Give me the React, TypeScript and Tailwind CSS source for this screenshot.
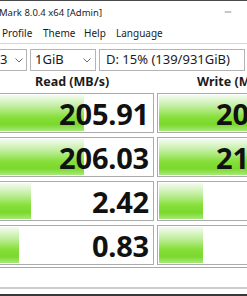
import { Minus } from "lucide-react"

/* results: bar widths are pixels inside each box */
const rows = [
  { read: "205.91", readBar: 84, write: "205.47", writeBar: 150 },
  { read: "206.03", readBar: 84, write: "211.52", writeBar: 150 },
  { read: "2.42", readBar: 31, write: "1.96", writeBar: 44 },
  { read: "0.83", readBar: 19, write: "1.88", writeBar: 44 },
]

function Chevron() {
  return (
    <svg width="8" height="5" viewBox="0 0 8 5" className="shrink-0">
      <polyline points="0.5,0.5 4,4 7.5,0.5" fill="none" stroke="#6b6b6b" strokeWidth="1" />
    </svg>
  )
}

function ResultBox({ value, bar, className }: { value: string; bar: number; className: string }) {
  return (
    <div className={`relative h-[40px] border border-[#ababab] bg-white p-px ${className}`}>
      <div
        className="h-full bg-[linear-gradient(to_bottom,#f4fbef_0%,#c4efa4_30%,#86df3a_62%,#7ad92c_82%,#a6e87a_100%)]"
        style={{ width: bar }}
      />
      <span className="absolute right-[4px] top-0 bottom-0 flex items-center text-[29px] font-bold leading-none text-[#111] tracking-[-0.2px]">
        {value}
      </span>
    </div>
  )
}

export default function App() {
  return (
    <div className="w-[247px] h-[296px] overflow-hidden bg-white font-['Noto_Sans',sans-serif] text-[#1b1b1b]">
      {/* title bar */}
      <div className="h-[25px] border-t border-[#4a4a4a] flex items-center justify-between">
        <span className="-ml-[1px] text-[9.5px]">Mark 8.0.4 x64 [Admin]</span>
        <Minus className="w-[10px] h-[10px] mr-[14px] mb-[3px] text-[#333]" strokeWidth={1.3} />
      </div>

      {/* menu */}
      <div className="h-[19px] border-b border-[#d6d6d6] flex items-center text-[10px] pb-[1px] whitespace-nowrap">
        <span className="ml-[2px] w-[41px] shrink-0">Profile</span>
        <span className="w-[41px] shrink-0">Theme</span>
        <span className="w-[32px] shrink-0">Help</span>
        <span>Language</span>
      </div>

      {/* combos */}
      <div className="mt-[5px] h-[22px] flex gap-[3px] text-[13px]">
        <div className="-ml-[12px] w-[39px] shrink-0 border border-[#b4b4b4] flex items-center justify-between pl-[11px] pr-[3px]">
          <span>3</span>
          <Chevron />
        </div>
        <div className="w-[66px] shrink-0 border border-[#b4b4b4] flex items-center justify-between pl-[4px] pr-[4px]">
          <span>1GiB</span>
          <Chevron />
        </div>
        <div className="w-[146px] shrink-0 border border-[#b4b4b4] flex items-center pl-[6px]">
          <span>D: 15% (139/931GiB)</span>
        </div>
      </div>

      {/* headers */}
      <div className="h-[22px] flex items-center text-[12.5px] font-bold whitespace-nowrap">
        <span className="ml-[35px] w-[162px] shrink-0">Read (MB/s)</span>
        <span className="shrink-0">Write (MB/s)</span>
      </div>

      {/* results */}
      <div className="flex flex-col gap-[4px]">
        {rows.map((r) => (
          <div key={r.read} className="flex gap-[3px]">
            <ResultBox value={r.read} bar={r.readBar} className="-ml-[2px] w-[156px] shrink-0" />
            <ResultBox value={r.write} bar={r.writeBar} className="w-[154px] shrink-0" />
          </div>
        ))}
      </div>

      {/* comment box */}
      <div className="mt-[2px] h-px bg-[#a9a9a9]" />
      <div className="h-[19px]" />
      <div className="h-[2px] bg-[#cdcdcd]" />
      <div className="h-[5px]" />
      <div className="h-[2px] bg-[#3a3a3a]" />
    </div>
  )
}
